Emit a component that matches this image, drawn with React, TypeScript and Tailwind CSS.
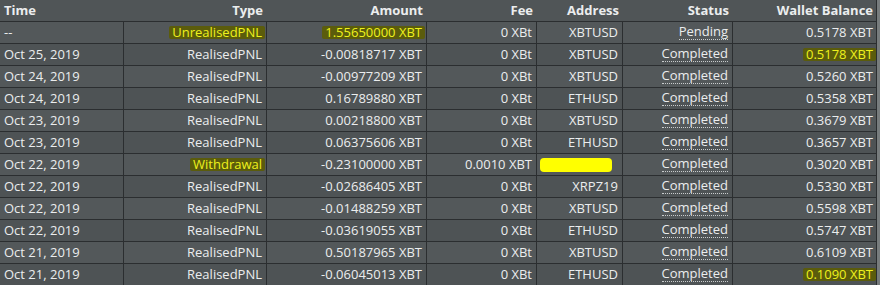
import React from 'react';

type Row = {
  time: string;
  type: string;
  amount: string;
  fee: string;
  address: string;
  status: string;
  balance: string;
  hlType?: boolean;
  hlAmount?: boolean;
  hlBalance?: boolean;
  hideAddress?: boolean;
};

const rows: Row[] = [
  { time: '--', type: 'UnrealisedPNL', amount: '1.55650000 XBT', fee: '0 XBt', address: 'XBTUSD', status: 'Pending', balance: '0.5178 XBT', hlType: true, hlAmount: true },
  { time: 'Oct 25, 2019', type: 'RealisedPNL', amount: '-0.00818717 XBT', fee: '0 XBt', address: 'XBTUSD', status: 'Completed', balance: '0.5178 XBT', hlBalance: true },
  { time: 'Oct 24, 2019', type: 'RealisedPNL', amount: '-0.00977209 XBT', fee: '0 XBt', address: 'XBTUSD', status: 'Completed', balance: '0.5260 XBT' },
  { time: 'Oct 24, 2019', type: 'RealisedPNL', amount: '0.16789880 XBT', fee: '0 XBt', address: 'ETHUSD', status: 'Completed', balance: '0.5358 XBT' },
  { time: 'Oct 23, 2019', type: 'RealisedPNL', amount: '0.00218800 XBT', fee: '0 XBt', address: 'XBTUSD', status: 'Completed', balance: '0.3679 XBT' },
  { time: 'Oct 23, 2019', type: 'RealisedPNL', amount: '0.06375606 XBT', fee: '0 XBt', address: 'ETHUSD', status: 'Completed', balance: '0.3657 XBT' },
  { time: 'Oct 22, 2019', type: 'Withdrawal', amount: '-0.23100000 XBT', fee: '0.0010 XBT', address: '', status: 'Completed', balance: '0.3020 XBT', hlType: true, hideAddress: true },
  { time: 'Oct 22, 2019', type: 'RealisedPNL', amount: '-0.02686405 XBT', fee: '0 XBt', address: 'XRPZ19', status: 'Completed', balance: '0.5330 XBT' },
  { time: 'Oct 22, 2019', type: 'RealisedPNL', amount: '-0.01488259 XBT', fee: '0 XBt', address: 'XBTUSD', status: 'Completed', balance: '0.5598 XBT' },
  { time: 'Oct 22, 2019', type: 'RealisedPNL', amount: '-0.03619055 XBT', fee: '0 XBt', address: 'ETHUSD', status: 'Completed', balance: '0.5747 XBT' },
  { time: 'Oct 21, 2019', type: 'RealisedPNL', amount: '0.50187965 XBT', fee: '0 XBt', address: 'XBTUSD', status: 'Completed', balance: '0.6109 XBT' },
  { time: 'Oct 21, 2019', type: 'RealisedPNL', amount: '-0.06045013 XBT', fee: '0 XBt', address: 'ETHUSD', status: 'Completed', balance: '0.1090 XBT', hlBalance: true },
];

const cols = 'grid grid-cols-[124px_143px_160px_110px_86px_110px_144px]';

const Hl = ({ on, children }: { on?: boolean; children: React.ReactNode }) =>
  on ? (
    <span className="bg-[#5b5c0c] text-[#eef21c] px-[3px] -mr-[3px] rounded-[2px]">{children}</span>
  ) : (
    <>{children}</>
  );

export default function App() {
  return (
    <div
      className="w-[880px] h-[285px] overflow-hidden bg-[#777c7d] text-[13px] text-[#ebedee]"
      style={{ fontFamily: '"Open Sans", "Noto Sans", sans-serif' }}
    >
      <div className="w-[877px] bg-[#505557] border-r border-[#2b2e30]">
        <div className={`${cols} h-[22px] items-center font-bold border-b border-[#2b2e30] leading-none`}>
          <div className="pl-[4px]">Time</div>
          <div className="text-right pr-[4px]">Type</div>
          <div className="text-right pr-[4px]">Amount</div>
          <div className="text-right pr-[4px]">Fee</div>
          <div className="text-right pr-[4px]">Address</div>
          <div className="text-right pr-[4px]">Status</div>
          <div className="text-right pr-[4px]">Wallet Balance</div>
        </div>
        {rows.map((r, i) => (
          <div
            key={i}
            className={`${cols} h-[22px] border-b border-[#2b2e30] leading-none ${i % 2 === 0 ? 'bg-[#53585a]' : 'bg-[#4e5355]'}`}
          >
            <div className="pl-[4px] flex items-center border-r border-[#2b2e30]">{r.time}</div>
            <div className="pr-[4px] flex items-center justify-end border-r border-[#2b2e30]">
              <Hl on={r.hlType}>{r.type}</Hl>
            </div>
            <div className="pr-[4px] flex items-center justify-end border-r border-[#2b2e30]">
              <Hl on={r.hlAmount}>{r.amount}</Hl>
            </div>
            <div className="pr-[4px] flex items-center justify-end border-r border-[#2b2e30]">{r.fee}</div>
            <div className="pr-[4px] flex items-center justify-end border-r border-[#2b2e30]">
              {r.hideAddress ? (
                <span className="block w-[72px] h-[14px] mr-[6px] bg-[#ffff00] rounded-[4px]" />
              ) : (
                r.address
              )}
            </div>
            <div className="pr-[4px] flex items-center justify-end border-r border-[#2b2e30]">
              <span className="border-b border-dotted border-[#c9cccd] pb-[1px]">{r.status}</span>
            </div>
            <div className="pr-[4px] flex items-center justify-end">
              <Hl on={r.hlBalance}>{r.balance}</Hl>
            </div>
          </div>
        ))}
      </div>
    </div>
  );
}
